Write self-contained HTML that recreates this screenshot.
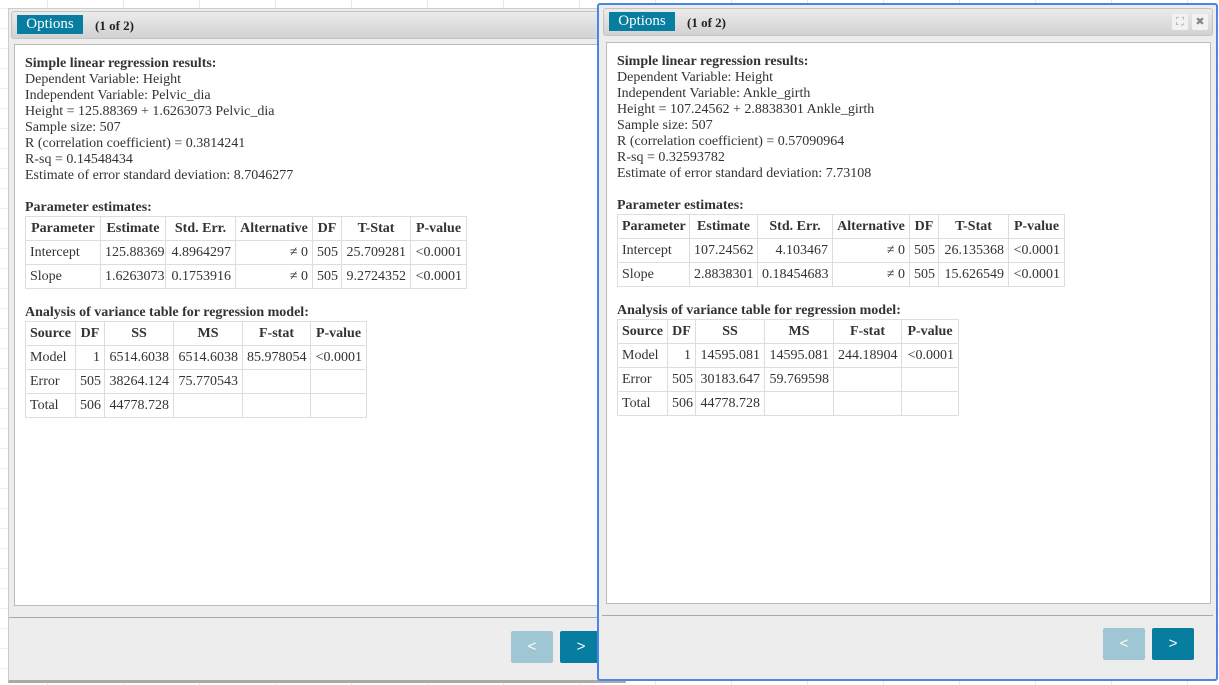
<!DOCTYPE html>
<html><head><style>
body{margin:0;width:1219px;height:685px;overflow:hidden;background:#fff;position:relative;font-family:"Liberation Serif",serif;color:#333;
background-image:linear-gradient(90deg,#e8e8e8 1px,transparent 1px),linear-gradient(#eee 1px,transparent 1px);background-size:76px 100%,100% 20px;background-position:47px 0,0 8px}
.win{position:absolute;background:#ededed;box-sizing:border-box}
.hdr{position:absolute;left:2px;right:4px;height:28px;background:linear-gradient(#ececec,#d2d2d2);border:1px solid #c4c4c4;border-radius:3px;box-sizing:border-box}
.opt{position:absolute;left:5px;top:3px;width:66px;height:19px;background:#077ea0;color:#fff;font-size:15px;line-height:19px;text-align:center}
.cnt{position:absolute;left:83px;top:6px;font-size:13px;font-weight:bold;color:#222}
.ico{position:absolute;top:5px;width:16px;height:16px;background:#f2f2f2;border-radius:2px;font-size:11px;line-height:16px;text-align:center;color:#999;font-family:"DejaVu Sans",sans-serif}
.box{position:absolute;background:#fff;border:1px solid #bbb;box-sizing:border-box;font-size:14px;line-height:16px;padding:11px 10px}
.div{position:absolute;height:1px;background:#aaa}
.btn{position:absolute;width:42px;height:32px;color:#fff;font-family:"Liberation Sans",sans-serif;font-size:15px;line-height:32px;text-align:center;border-radius:2px}
table{border-collapse:collapse;table-layout:fixed;font-size:14px;margin-top:0}
td,th{border:1px solid #ddd;height:23px;padding:0 4px;white-space:nowrap;overflow:hidden}
th{text-align:center}
td.r{text-align:right}
b{display:block}
</style></head><body>

<div class="win" style="left:8px;top:8px;width:618px;height:675px;border:1px solid #ccc;border-bottom:3px solid #aaa">
 <div class="hdr" style="top:2px"><div class="opt">Options</div><div class="cnt">(1 of 2)</div><div class="ico" style="right:6px">⛶</div></div>
 <div class="box" style="left:5px;top:35px;width:610px;height:562px">
  <b>Simple linear regression results:</b>
  Dependent Variable: Height<br>Independent Variable: Pelvic_dia<br>Height = 125.88369 + 1.6263073 Pelvic_dia<br>Sample size: 507<br>R (correlation coefficient) = 0.3814241<br>R-sq = 0.14548434<br>Estimate of error standard deviation: 8.7046277<br><br>
  <b>Parameter estimates:</b>
  <table style="width:441px"><colgroup><col style="width:75px"><col style="width:65px"><col style="width:70px"><col style="width:77px"><col style="width:29px"><col style="width:69px"><col style="width:56px"></colgroup>
  <tr><th>Parameter</th><th>Estimate</th><th>Std. Err.</th><th>Alternative</th><th>DF</th><th>T-Stat</th><th>P-value</th></tr>
  <tr><td>Intercept</td><td class="r">125.88369</td><td class="r">4.8964297</td><td class="r">≠ 0</td><td class="r">505</td><td class="r">25.709281</td><td class="r">&lt;0.0001</td></tr>
  <tr><td>Slope</td><td class="r">1.6263073</td><td class="r">0.1753916</td><td class="r">≠ 0</td><td class="r">505</td><td class="r">9.2724352</td><td class="r">&lt;0.0001</td></tr></table>
  <div style="height:16px"></div>
  <b>Analysis of variance table for regression model:</b>
  <table style="width:342px"><colgroup><col style="width:50px"><col style="width:29px"><col style="width:69px"><col style="width:69px"><col style="width:68px"><col style="width:56px"></colgroup>
  <tr><th>Source</th><th>DF</th><th>SS</th><th>MS</th><th>F-stat</th><th>P-value</th></tr>
  <tr><td>Model</td><td class="r">1</td><td class="r">6514.6038</td><td class="r">6514.6038</td><td class="r">85.978054</td><td class="r">&lt;0.0001</td></tr>
  <tr><td>Error</td><td class="r">505</td><td class="r">38264.124</td><td class="r">75.770543</td><td></td><td></td></tr>
  <tr><td>Total</td><td class="r">506</td><td class="r">44778.728</td><td></td><td></td><td></td></tr></table>
 </div>
 <div class="div" style="left:0;right:0;top:608px"></div>
 <div class="btn" style="left:502px;top:622px;background:#9fc7d3">&lt;</div>
 <div class="btn" style="left:551px;top:622px;background:#077ea0">&gt;</div>
</div>

<div class="win" style="left:597px;top:3px;width:621px;height:678px;border:2px solid #4a86e8;border-radius:3px">
 <div class="hdr" style="top:3px;left:4px;right:3px"><div class="opt">Options</div><div class="cnt">(1 of 2)</div><div class="ico" style="right:24px">⛶</div><div class="ico" style="right:4px;font-weight:bold;color:#888">✖</div></div>
 <div class="box" style="left:7px;top:37px;width:605px;height:562px">
  <b>Simple linear regression results:</b>
  Dependent Variable: Height<br>Independent Variable: Ankle_girth<br>Height = 107.24562 + 2.8838301 Ankle_girth<br>Sample size: 507<br>R (correlation coefficient) = 0.57090964<br>R-sq = 0.32593782<br>Estimate of error standard deviation: 7.73108<br><br>
  <b>Parameter estimates:</b>
  <table style="width:447px"><colgroup><col style="width:72px"><col style="width:68px"><col style="width:75px"><col style="width:77px"><col style="width:29px"><col style="width:70px"><col style="width:56px"></colgroup>
  <tr><th>Parameter</th><th>Estimate</th><th>Std. Err.</th><th>Alternative</th><th>DF</th><th>T-Stat</th><th>P-value</th></tr>
  <tr><td>Intercept</td><td class="r">107.24562</td><td class="r">4.103467</td><td class="r">≠ 0</td><td class="r">505</td><td class="r">26.135368</td><td class="r">&lt;0.0001</td></tr>
  <tr><td>Slope</td><td class="r">2.8838301</td><td class="r">0.18454683</td><td class="r">≠ 0</td><td class="r">505</td><td class="r">15.626549</td><td class="r">&lt;0.0001</td></tr></table>
  <div style="height:16px"></div>
  <b>Analysis of variance table for regression model:</b>
  <table style="width:341px"><colgroup><col style="width:50px"><col style="width:28px"><col style="width:69px"><col style="width:69px"><col style="width:68px"><col style="width:57px"></colgroup>
  <tr><th>Source</th><th>DF</th><th>SS</th><th>MS</th><th>F-stat</th><th>P-value</th></tr>
  <tr><td>Model</td><td class="r">1</td><td class="r">14595.081</td><td class="r">14595.081</td><td class="r">244.18904</td><td class="r">&lt;0.0001</td></tr>
  <tr><td>Error</td><td class="r">505</td><td class="r">30183.647</td><td class="r">59.769598</td><td></td><td></td></tr>
  <tr><td>Total</td><td class="r">506</td><td class="r">44778.728</td><td></td><td></td><td></td></tr></table>
 </div>
 <div class="div" style="left:3px;right:3px;top:610px"></div>
 <div class="btn" style="left:504px;top:623px;background:#9fc7d3">&lt;</div>
 <div class="btn" style="left:553px;top:623px;background:#077ea0">&gt;</div>
</div>
</body></html>
